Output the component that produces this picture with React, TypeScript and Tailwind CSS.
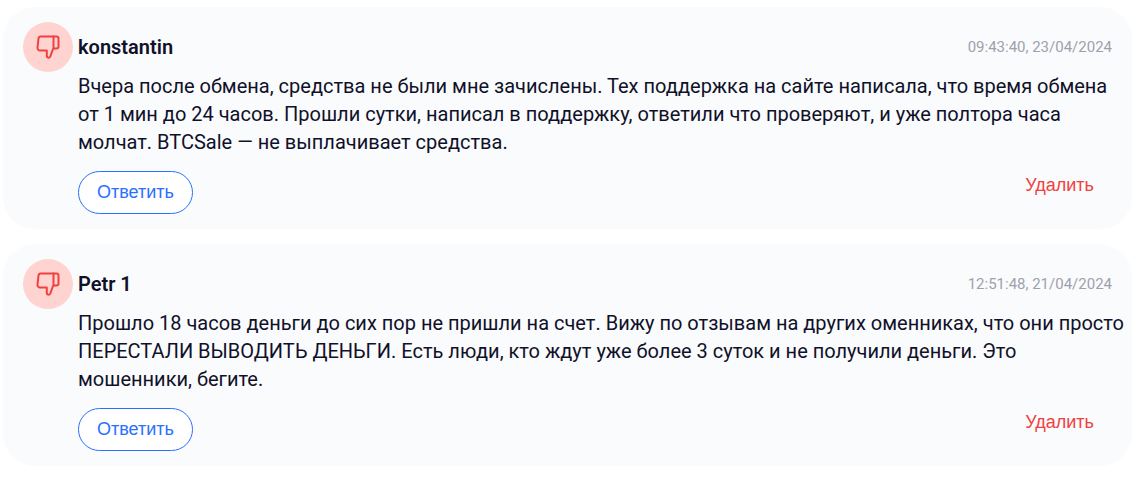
import React from 'react';

interface Review {
  id: number;
  author: string;
  date: string;
  text: string;
}

const reviews: Review[] = [
  {
    id: 1,
    author: 'konstantin',
    date: '09:43:40, 23/04/2024',
    text: 'Вчера после обмена, средства не были мне зачислены. Тех поддержка на сайте написала, что время обмена от 1 мин до 24 часов. Прошли сутки, написал в поддержку, ответили что проверяют, и уже полтора часа молчат. BTCSale — не выплачивает средства.',
  },
  {
    id: 2,
    author: 'Petr 1',
    date: '12:51:48, 21/04/2024',
    text: 'Прошло 18 часов деньги до сих пор не пришли на счет. Вижу по отзывам на других оменниках, что они просто ПЕРЕСТАЛИ ВЫВОДИТЬ ДЕНЬГИ. Есть люди, кто ждут уже более 3 суток и не получили деньги. Это мошенники, бегите.',
  },
];

const DislikeIcon = () => (
  <svg
    className="w-[26px] h-[26px]"
    viewBox="0 0 26 26"
    fill="none"
    stroke="currentColor"
    strokeWidth="2"
    strokeLinecap="round"
    strokeLinejoin="round"
    aria-hidden="true"
  >
    <path d="M18.500 2.500v12" />
    <path d="M5.800 2.500H21.500a2 2 0 0 1 2 2v8a2 2 0 0 1-2 2h-2.200c-.8 0-1.200.4-1.500 1L15.300 22.500a1.800 1.800 0 0 1-1.500 1.200c-1.200 0-2-.8-2-2V16.500H5a2.500 2.500 0 0 1-2.500-2.800L3.500 4.600A2.300 2.300 0 0 1 5.800 2.500z" />
  </svg>
);

const ReviewCard: React.FC<{ review: Review }> = ({ review }) => (
  <article className="flex gap-[5px] rounded-[32px] bg-[#fafbfd] pt-[15px] pb-[15px] pl-5 pr-2">
    <div className="flex size-[50px] shrink-0 items-center justify-center rounded-full bg-[#ffd3d0] text-[#f04040]">
      <DislikeIcon />
    </div>
    <div className="min-w-0 flex-1">
      <header className="flex h-[50px] items-center justify-between pr-3">
        <h3 className="text-xl font-semibold">{review.author}</h3>
        <time className="text-[15px] text-[#a0a0ab]">{review.date}</time>
      </header>
      <p className="text-xl leading-7">{review.text}</p>
      <footer className="mt-[15px] flex items-start justify-between pr-[30px] font-['Liberation_Sans',Arial,sans-serif] text-lg">
        <button className="h-[43px] rounded-full border border-[#2970ff] bg-white px-[18px] pb-0.5 text-[#2970ff]">
          Ответить
        </button>
        <button className="text-[#f04040]">Удалить</button>
      </footer>
    </div>
  </article>
);

export default function App() {
  return (
    <main className="flex min-h-screen flex-col gap-[15px] bg-white pt-[7px] pr-2.5 pl-[3px] font-[Roboto,sans-serif] text-[#101129]">
      {reviews.map((review) => (
        <ReviewCard key={review.id} review={review} />
      ))}
    </main>
  );
}
